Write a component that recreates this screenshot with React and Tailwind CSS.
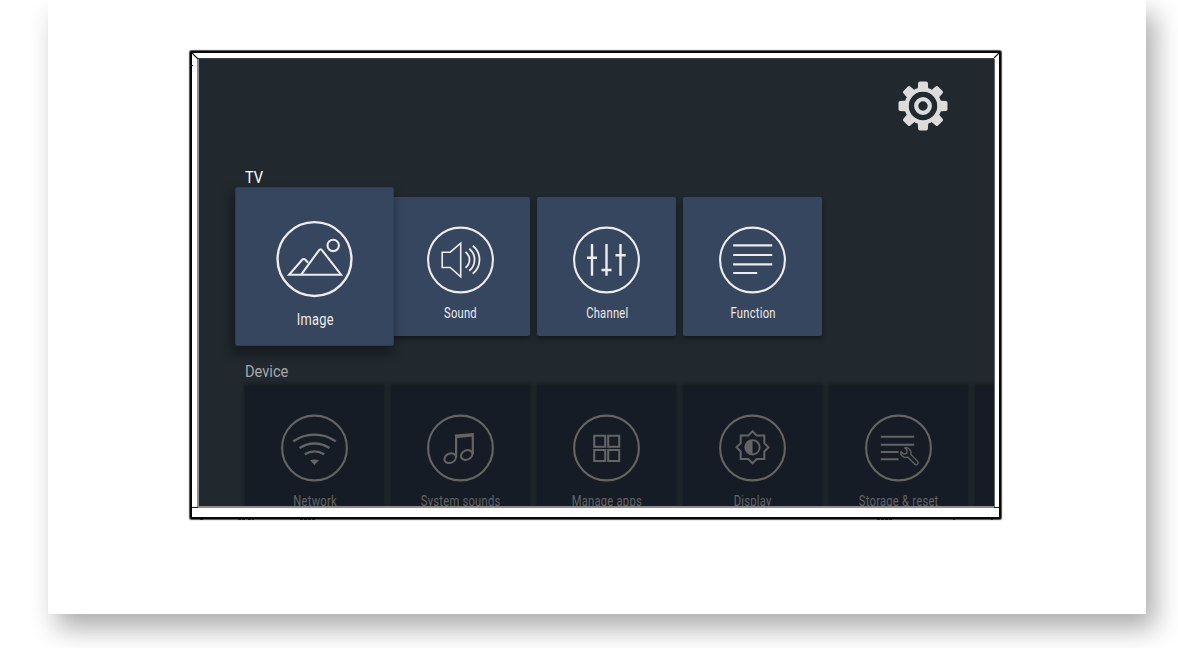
import React from "react";

function Ring({ children }) {
  return (
    <svg viewBox="-34.5 -34 69 68" className="h-[68px] w-[69px] shrink-0" fill="none" stroke="currentColor" strokeWidth="1.8">
      <circle r="32.4" strokeWidth="2.1" />
      {children}
    </svg>
  );
}

const icons = {
  image: (
    <>
      <circle cx="16.4" cy="-12" r="5" />
      <path d="M-11.7 13.7 L3.9 -7.7 Q5.3 -9.6 6.7 -7.7 L23.3 13.7 H-22.3 L-10.8 0.6 Q-9.4 -0.8 -8 0.6 L-5.6 3.2" />
    </>
  ),
  sound: (
    <>
      <path d="M-18.3 -7.8 H-10.3 L0.2 -16.8 V16.8 L-10.3 7.5 H-18.3 Z" strokeWidth="1.6" />
      <path d="M5 -8 A9.7 9.7 0 0 1 5 7.7 M8.7 -11.3 A14 14 0 0 1 8.7 10.7 M12.3 -14.3 A18 18 0 0 1 12.3 13.7" />
    </>
  ),
  channel: (
    <path d="M-14.5 -16 V15.7 M-19.5 -2.3 H-9.5 M0 -16 V15.7 M-5 10 H5 M14 -16 V15.7 M9 -4.7 H19.2" strokeWidth="2.4" />
  ),
  fn: <path d="M-19.3 -14.7 H19.7 M-19.3 -5 H19.7 M-19.3 4.3 H19.7 M-19.3 13 H4.7" strokeWidth="2.2" />,
  network: (
    <>
      <path d="M-21.2 -6.7 A37 37 0 0 1 21.2 -6.7 M-15 0 A27 27 0 0 1 15 0 M-9.7 6.3 A18.8 18.8 0 0 1 9.7 6.3" strokeWidth="2.4" />
      <path d="M-4.5 12.3 Q0 10.6 4.5 12.3 L0 17 Z" fill="currentColor" stroke="none" />
    </>
  ),
  music: (
    <>
      <path d="M-4.4 9.5 V-12.4 L12.3 -13.9 V6.5" strokeWidth="2.2" />
      <path d="M-4.4 -11 L12.3 -12.7" strokeWidth="2.4" />
      <ellipse cx="-10.3" cy="10.2" rx="6" ry="4.6" transform="rotate(-25 -10.3 10.2)" strokeWidth="2" />
      <ellipse cx="6.2" cy="7" rx="6" ry="4.6" transform="rotate(-25 6.2 7)" strokeWidth="2" />
    </>
  ),
  apps: (
    <path d="M-12.3 -12.3 H-1.3 V-1.3 H-12.3 Z M1.7 -12.3 H12.7 V-1.3 H1.7 Z M-12.3 2 H-1.3 V13 H-12.3 Z M1.7 2 H12.7 V13 H1.7 Z" strokeWidth="2.1" />
  ),
  display: (
    <g transform="translate(0 -0.7)">
      <path d="M0 -16 L4.2 -11.8 H11.8 V-4.2 L16 0 L11.8 4.2 V11.8 H4.2 L0 16 L-4.2 11.8 H-11.8 V4.2 L-16 0 L-11.8 -4.2 V-11.8 H-4.2 Z" strokeWidth="2" />
      <circle r="7.2" strokeWidth="1.9" />
      <path d="M0 -7 A7 7 0 0 0 0 7 Z" fill="currentColor" stroke="none" />
    </g>
  ),
  storage: (
    <>
      <path d="M-17.7 -11.3 H15.7 M-17.7 -3.3 H15.7 M-17.7 4 H0 M-17.7 11.3 H0" strokeWidth="2.1" />
      <path d="M6.3 -0.2 C10 -1 13.5 2.5 12.2 6.4 L19.1 13.4 C20.7 15.2 18.4 18 16.5 16.3 L9.3 9.2 C5 10.4 1.5 7.4 2.4 3.6 L4.9 5.9 H7.4 L8.5 4.8 V2.2 Z" strokeWidth="1.3" strokeLinejoin="round" />
    </>
  ),
};

function Tile({ icon, label, focused, dim }) {
  return (
    <div
      className={
        "flex h-[139px] w-[139px] shrink-0 flex-col items-center gap-[10px] rounded-[2px] pt-[29px] " +
        (dim
          ? "bg-[#161c26] text-[#646464] shadow-[0_0_3px_2px_rgba(24,31,36,0.9)]"
          : "bg-[#37465f] text-[#ececec] " +
            (focused
              ? "z-10 scale-[1.14] shadow-[-2px_6px_8px_1px_rgba(15,20,22,0.6)]"
              : "shadow-[0_3px_5px_rgba(10,15,18,0.6)]"))
      }
    >
      {icon && <Ring>{icons[icon]}</Ring>}
      <span className="scale-x-[0.8] whitespace-nowrap pl-px text-[14px] leading-[18px] tracking-[0.3px]">{label}</span>
    </div>
  );
}

function Section({ title, dim, children }) {
  return (
    <section className={"flex shrink-0 flex-col pl-[46px] " + (dim ? "gap-0.5" : "gap-2")}>
      <h2 className={"origin-left scale-x-[0.86] text-[17px] leading-[24px] " + (dim ? "text-[#a5a9ab]" : "text-white")}>{title}</h2>
      <div className="flex gap-[7px]">{children}</div>
    </section>
  );
}

function Gear() {
  return (
    <svg viewBox="-25 -25 50 50" className="h-[50px] w-[50px]">
      <g fill="#dcdcdc">
        {[0, 45, 90, 135, 180, 225, 270, 315].map((a) => (
          <path key={a} transform={`rotate(${a})`} d="M-5.4 -15 L-4.9 -22.8 Q-4.7 -24.5 -3.2 -24.5 H3.2 Q4.7 -24.5 4.9 -22.8 L5.4 -15 Z" />
        ))}
      </g>
      <circle r="16.2" fill="none" stroke="#dcdcdc" strokeWidth="4.6" />
      <circle r="14.2" fill="#21292f" />
      <circle r="6.8" fill="none" stroke="#dcdcdc" strokeWidth="4.2" />
    </svg>
  );
}

function BezelLines() {
  return (
    <svg viewBox="0 0 811 470" className="pointer-events-none z-20 col-start-1 row-start-1 h-[470px] w-[811px]" fill="none" stroke="#1a1a1a">
      <path d="M2 2 L8 8 M809 2 L804 7" strokeWidth="1.2" />
      <path d="M-0.5 14.5 H3" />
      <path d="M8 7.5 H804" stroke="#3a3d3e" />
      <path d="M804.5 8 V456" stroke="#666" />
      <path d="M2 456.5 H8 M804 456.5 H809" />
      <path d="M10 468.4 H14 M48 468.4 H56 M58 468.4 H64 M110 468.4 H125 M687 468.4 H703 M763 468.4 H765 M801 468.4 H803" strokeDasharray="3 1" />
    </svg>
  );
}

function Television() {
  return (
    <div className="grid items-start justify-start">
      <div className="col-start-1 row-start-1 h-[468px] w-[811px] rounded-[2px] border-2 border-[#080808] bg-white px-[5px] pt-[5px] shadow-[0_0_1px_0.5px_rgba(0,0,0,0.7)]">
        <main className="flex h-[450px] w-[797px] flex-col overflow-hidden border-b-2 border-l-2 border-[#8e8c8b] bg-[#21292f] font-[Roboto,sans-serif]">
          <header className="flex h-[107px] shrink-0 justify-end pr-[46px] pt-[23px]">
            <Gear />
          </header>
          <div className="flex flex-col gap-[23px]">
            <Section title="TV">
              <Tile icon="image" label="Image" focused />
              <Tile icon="sound" label="Sound" />
              <Tile icon="channel" label="Channel" />
              <Tile icon="fn" label="Function" />
            </Section>
            <Section title="Device" dim>
              <Tile dim icon="network" label="Network" />
              <Tile dim icon="music" label="System sounds" />
              <Tile dim icon="apps" label="Manage apps" />
              <Tile dim icon="display" label="Display" />
              <Tile dim icon="storage" label="Storage & reset" />
              <Tile dim label="" />
            </Section>
          </div>
        </main>
      </div>
      <BezelLines />
    </div>
  );
}

export default function App() {
  return (
    <div className="h-[648px] w-[1178px] overflow-hidden bg-white pl-[48px]">
      <div className="h-[614px] w-[1098px] bg-white pl-[142px] pt-[51px] shadow-[9px_14px_25px_rgba(0,0,0,0.33)]">
        <Television />
      </div>
    </div>
  );
}
